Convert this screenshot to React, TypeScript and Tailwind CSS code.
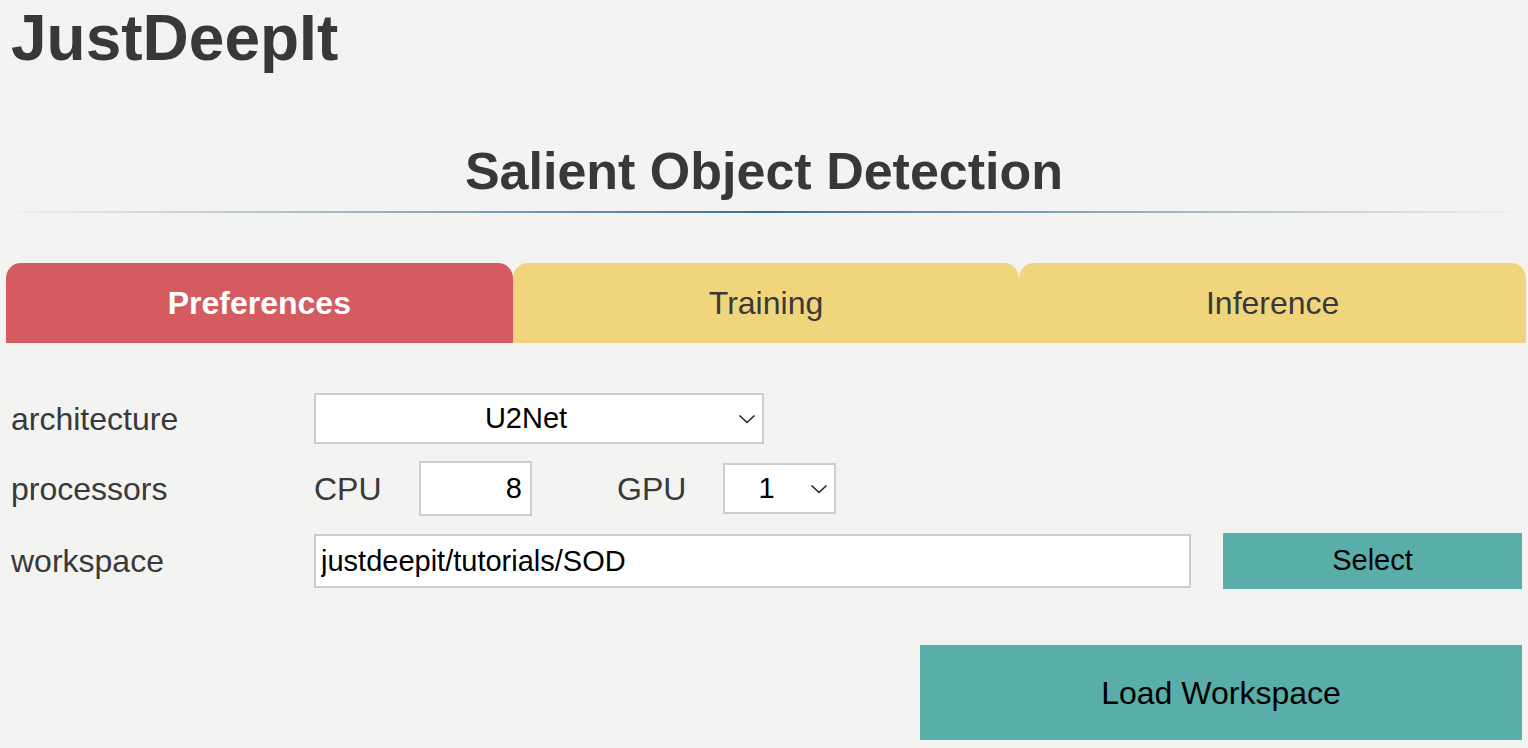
import { useState } from "react";

const Chevron = () => (
  <svg
    width="18"
    height="10"
    viewBox="0 0 18 10"
    fill="none"
    stroke="#222"
    strokeWidth="1.6"
    className="pointer-events-none absolute right-[8px] top-1/2 -translate-y-1/2"
  >
    <path d="M1.5 1.5 L9 8.5 L16.5 1.5" />
  </svg>
);

const App = () => {
  const [tab, setTab] = useState<string>("Preferences");
  const [arch, setArch] = useState<string>("U2Net");
  const [cpu, setCpu] = useState<string>("8");
  const [gpu, setGpu] = useState<string>("1");
  const [workspace, setWorkspace] = useState<string>(
    "justdeepit/tutorials/SOD"
  );

  const tabs = ["Preferences", "Training", "Inference"];

  return (
    <div className="min-h-screen w-full bg-[#f3f3f2] font-['Liberation_Sans',Arial,sans-serif] text-[#393939]">
      <h1 className="pl-[11px] pt-[6px] text-[64px] font-bold leading-none text-[#383838]">
        JustDeepIt
      </h1>

      <h2 className="mt-[75px] text-center text-[52px] font-bold leading-none text-[#383838]">
        Salient Object Detection
      </h2>
      <div className="mt-[14px] h-[2px] w-full bg-linear-to-r from-transparent via-[#3a6f91] to-transparent"></div>

      <div className="ml-[6px] mr-[2px] mt-[50px] flex h-[80px]">
        {tabs.map((t) =>
          t === tab ? (
            <div
              key={t}
              onClick={() => setTab(t)}
              className="flex flex-1 cursor-pointer items-center justify-center rounded-t-[15px] bg-[#d45b5f] text-[32px] font-bold text-white"
            >
              {t}
            </div>
          ) : (
            <div
              key={t}
              onClick={() => setTab(t)}
              className="flex flex-1 cursor-pointer items-center justify-center rounded-t-[15px] bg-[#f1d57d] text-[32px] text-[#393939]"
            >
              {t}
            </div>
          )
        )}
      </div>

      <div className="ml-[11px] mr-[6px] mt-[50px] flex flex-col">
        {/* architecture */}
        <div className="flex h-[51px] items-center">
          <span className="w-[303px] text-[32px] text-[#393939]">
            architecture
          </span>
          <div className="relative h-[51px] w-[450px]">
            <select
              value={arch}
              onChange={(e) => setArch(e.target.value)}
              className="h-full w-full appearance-none border-2 border-[#cdcdcd] bg-white pr-[26px] text-center text-[29px] text-black outline-none [text-align-last:center]"
            >
              <option>U2Net</option>
            </select>
            <Chevron />
          </div>
        </div>

        {/* processors */}
        <div className="mt-[17px] flex h-[55px] items-center">
          <span className="w-[303px] text-[32px] text-[#393939]">
            processors
          </span>
          <span className="w-[105px] text-[32px] text-[#393939]">CPU</span>
          <input
            value={cpu}
            onChange={(e) => setCpu(e.target.value)}
            className="h-[55px] w-[113px] border-2 border-[#cdcdcd] bg-white pr-[8px] text-right text-[29px] text-black outline-none"
          />
          <span className="ml-[85px] w-[106px] text-[32px] text-[#393939]">
            GPU
          </span>
          <div className="relative h-[51px] w-[113px]">
            <select
              value={gpu}
              onChange={(e) => setGpu(e.target.value)}
              className="h-full w-full appearance-none border-2 border-[#cdcdcd] bg-white pr-[26px] text-center text-[29px] text-black outline-none [text-align-last:center]"
            >
              <option>1</option>
              <option>0</option>
            </select>
            <Chevron />
          </div>
        </div>

        {/* workspace */}
        <div className="mt-[17px] flex h-[56px] items-center">
          <span className="w-[303px] text-[32px] text-[#393939]">
            workspace
          </span>
          <input
            value={workspace}
            onChange={(e) => setWorkspace(e.target.value)}
            className="h-[54px] w-[877px] border-2 border-[#cdcdcd] bg-white pl-[5px] text-[29px] text-black outline-none"
          />
          <button className="ml-[32px] h-[56px] w-[299px] cursor-pointer bg-[#5aaea9] text-[29px] text-black">
            Select
          </button>
        </div>

        <div className="mt-[56px] flex justify-end">
          <button className="h-[95px] w-[602px] cursor-pointer bg-[#5aaea9] text-[32px] text-black">
            Load Workspace
          </button>
        </div>
      </div>
    </div>
  );
};

export default App;
